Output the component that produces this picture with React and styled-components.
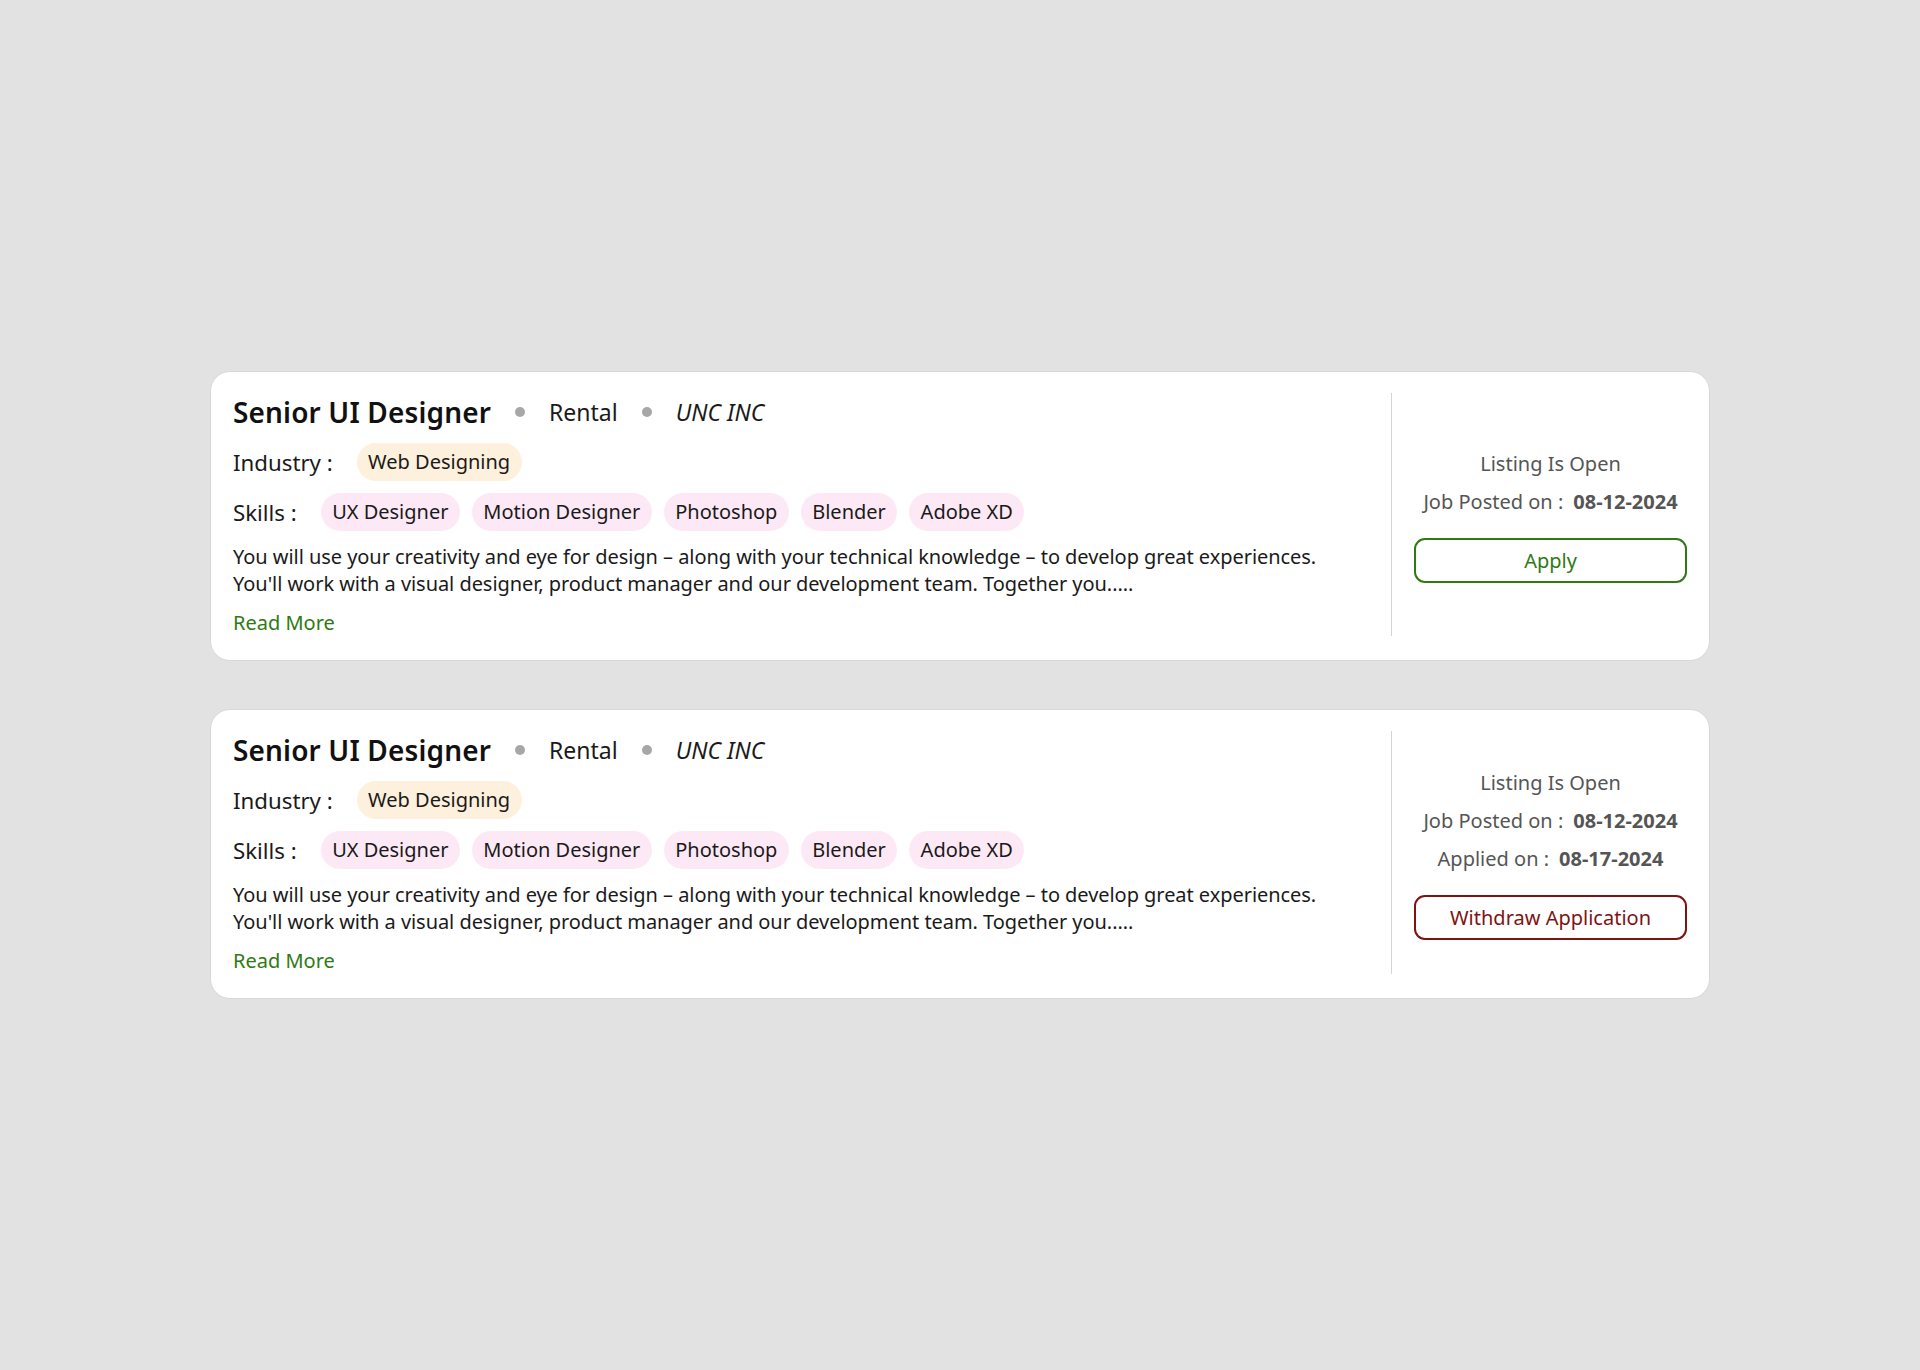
import React from "react";
import styled, { createGlobalStyle } from "styled-components";

const GlobalStyle = createGlobalStyle`
  html, body, #root {
    height: 100%;
  }
  body {
    margin: 0;
    background: #e2e2e2;
    font-family: "Noto Sans", "Open Sans", sans-serif;
    color: #141414;
  }
`;

const Page = styled.div`
  min-height: 100%;
  display: flex;
  flex-direction: column;
  align-items: center;
  justify-content: center;
  gap: 48px;
`;

const Card = styled.div`
  width: 1500px;
  box-sizing: border-box;
  display: flex;
  padding: 21px 22px 24px;
  background: #ffffff;
  border: 1px solid #d8d8d8;
  border-radius: 20px;
`;

const Main = styled.div`
  flex: 1;
  display: flex;
  flex-direction: column;
  gap: 12px;
`;

const TitleRow = styled.div`
  display: flex;
  align-items: center;
  gap: 24px;
`;

const Title = styled.h2`
  margin: 0;
  font-size: 28px;
  font-weight: 600;
  letter-spacing: 0.15px;
  color: #111;
`;

const Dot = styled.span`
  width: 10px;
  height: 10px;
  border-radius: 50%;
  background: #a7a7a7;
`;

const Meta = styled.span`
  font-size: 23px;
  font-style: ${(p) => (p.italic ? "italic" : "normal")};
  color: #1a1a1a;
`;

const FieldRow = styled.div`
  display: flex;
  align-items: center;
  gap: 24px;
`;

const Label = styled.span`
  font-size: 22.25px;
  color: #1a1a1a;
`;

const Chips = styled.div`
  display: flex;
  gap: 12px;
`;

const Chip = styled.span`
  font-size: 20px;
  line-height: 28px;
  padding: 5px 11.4px;
  border-radius: 19px;
  color: #1a1a1a;
  background: ${(p) => (p.tone === "cream" ? "#fdf0dc" : "#fde9f6")};
`;

const Desc = styled.p`
  margin: 0;
  font-size: 20px;
  line-height: 27px;
  letter-spacing: -0.05px;
  color: #1a1a1a;
`;

const ReadMore = styled.a`
  align-self: flex-start;
  font-size: 20px;
  line-height: 27px;
  color: #2f7a12;
  text-decoration: none;
  cursor: pointer;
`;

const Side = styled.div`
  width: 296px;
  box-sizing: border-box;
  padding: 4px 0 0 22px;
  border-left: 1px solid #d4d4d4;
  display: flex;
  flex-direction: column;
  align-items: center;
  justify-content: center;
  gap: 11px;
`;

const Info = styled.div`
  font-size: 20px;
  line-height: 27px;
  color: #555;
  white-space: nowrap;

  strong {
    font-weight: 700;
    margin-left: 10px;
  }
`;

const ActionButton = styled.button`
  margin-top: 12px;
  width: 100%;
  height: 45px;
  box-sizing: border-box;
  background: #fff;
  border: 2px solid ${(p) => p.color};
  border-radius: 11px;
  color: ${(p) => p.color};
  font-family: inherit;
  font-size: 20px;
  cursor: pointer;
`;

const skills = ["UX Designer", "Motion Designer", "Photoshop", "Blender", "Adobe XD"];

const jobs = [
  { posted: "08-12-2024", action: "Apply", color: "#2f7a12" },
  { posted: "08-12-2024", applied: "08-17-2024", action: "Withdraw Application", color: "#7d1414" },
];

const JobCard = ({ job }) => (
  <Card>
    <Main>
      <TitleRow>
        <Title>Senior UI Designer</Title>
        <Dot />
        <Meta>Rental</Meta>
        <Dot />
        <Meta italic>UNC INC</Meta>
      </TitleRow>
      <FieldRow>
        <Label>Industry :</Label>
        <Chip tone="cream">Web Designing</Chip>
      </FieldRow>
      <FieldRow>
        <Label>Skills :</Label>
        <Chips>
          {skills.map((s) => (
            <Chip key={s}>{s}</Chip>
          ))}
        </Chips>
      </FieldRow>
      <Desc>
        You will use your creativity and eye for design – along with your technical knowledge – to develop great experiences.
        <br />
        You'll work with a visual designer, product manager and our development team. Together you.....
      </Desc>
      <ReadMore>Read More</ReadMore>
    </Main>
    <Side>
      <Info>Listing Is Open</Info>
      <Info>
        Job Posted on :<strong>{job.posted}</strong>
      </Info>
      {job.applied && (
        <Info>
          Applied on :<strong>{job.applied}</strong>
        </Info>
      )}
      <ActionButton color={job.color}>{job.action}</ActionButton>
    </Side>
  </Card>
);

export default function App() {
  return (
    <>
      <GlobalStyle />
      <Page>
        {jobs.map((job, i) => (
          <JobCard key={i} job={job} />
        ))}
      </Page>
    </>
  );
}
